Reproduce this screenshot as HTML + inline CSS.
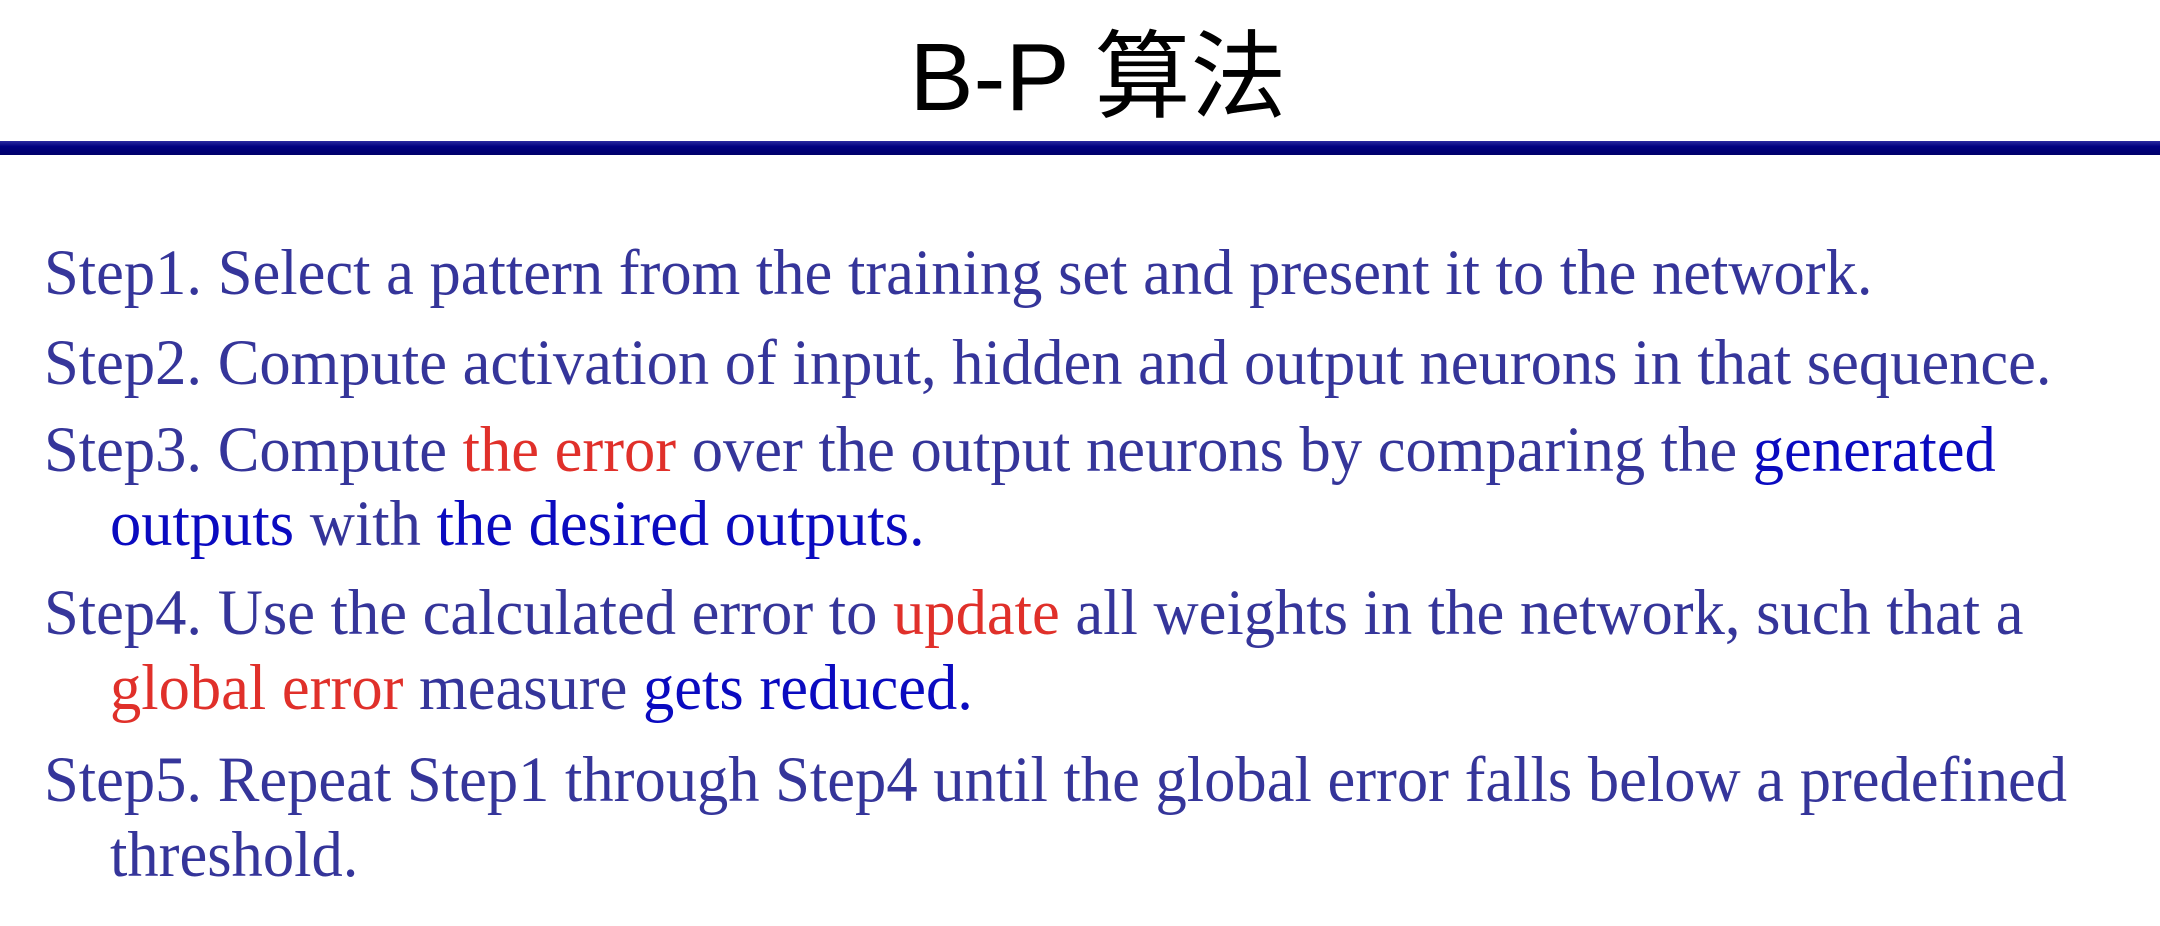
<!DOCTYPE html>
<html><head><meta charset="utf-8"><style>
html,body{margin:0;padding:0;background:#fff;width:2160px;height:926px;overflow:hidden;position:relative}
.t{position:absolute;left:18px;width:2160px;text-align:center;top:24px;font-family:"Liberation Sans","Noto Sans CJK SC",sans-serif;font-size:96px;line-height:108px;color:#000}
.bar{position:absolute;left:0;top:141px;width:2160px;height:14px;background:linear-gradient(#2a2aa0,#000080 40%,#00006a)}
.l{position:absolute;font-family:"Liberation Serif",serif;font-size:65px;line-height:64px;color:#35359a;white-space:nowrap;transform-origin:0 0;transform:scaleX(0.962)}
.r{color:#e0302a}.b{color:#0a0ac0}
</style></head><body>
<div class="t">B-P 算法</div>
<div class="bar"></div>
<div class="l" style="left:44px;top:241px">Step1. Select a pattern from the training set and present it to the network.</div>
<div class="l" style="left:44px;top:331px">Step2. Compute activation of input, hidden and output neurons in that sequence.</div>
<div class="l" style="left:44px;top:418px">Step3. Compute <span class="r">the error</span> over the output neurons by comparing the <span class="b">generated</span></div>
<div class="l b" style="left:110px;top:492px">outputs <span style="color:#35359a">with</span> the desired outputs.</div>
<div class="l" style="left:44px;top:581px">Step4. Use the calculated error to <span class="r">update</span> all weights in the network, such that a</div>
<div class="l" style="left:110px;top:656px"><span class="r">global error</span> measure <span class="b">gets reduced.</span></div>
<div class="l" style="left:44px;top:748px">Step5. Repeat Step1 through Step4 until the global error falls below a predefined</div>
<div class="l" style="left:110px;top:823px">threshold.</div>
</body></html>
